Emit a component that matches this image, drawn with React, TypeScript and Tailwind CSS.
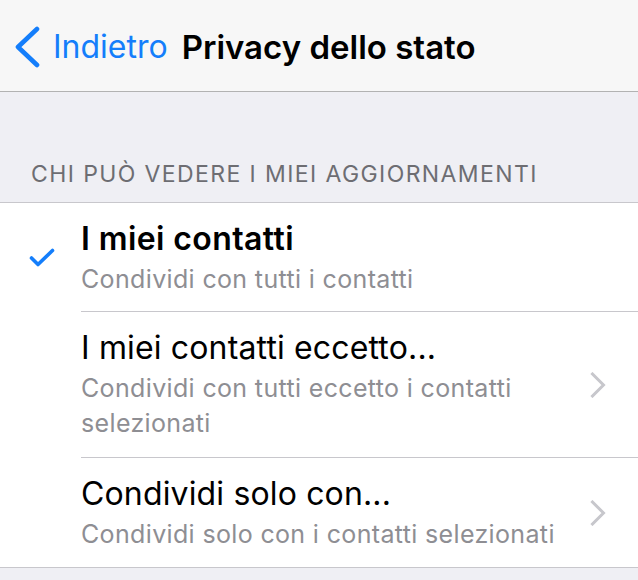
import React from "react";

type Option = {
  title: string;
  subtitle: string;
  selected?: boolean;
  chevron?: boolean;
  bold?: boolean;
  pad: string;
  last?: boolean;
};

const options: Option[] = [
  {
    title: "I miei contatti",
    subtitle: "Condividi con tutti i contatti",
    selected: true,
    bold: true,
    pad: "pt-[16px] pb-[14px]",
  },
  {
    title: "I miei contatti eccetto...",
    subtitle: "Condividi con tutti eccetto i contatti selezionati",
    chevron: true,
    pad: "pt-[16px] pb-[16px]",
  },
  {
    title: "Condividi solo con...",
    subtitle: "Condividi solo con i contatti selezionati",
    chevron: true,
    pad: "pt-[16px] pb-[15px]",
    last: true,
  },
];

const BackChevron = () => (
  <svg width="28" height="42" viewBox="0 0 28 42" fill="none">
    <path
      d="M24 3 L5 21 L24 39"
      stroke="#147efb"
      strokeWidth="4.6"
      strokeLinecap="round"
      strokeLinejoin="round"
    />
  </svg>
);

const Check = () => (
  <svg width="26" height="19" viewBox="0 0 26 19" fill="none">
    <path
      d="M2.5 10 L9 16.5 L23.5 2.5"
      stroke="#147efb"
      strokeWidth="3.6"
      strokeLinecap="round"
      strokeLinejoin="round"
    />
  </svg>
);

const Chevron = () => (
  <svg width="17" height="26" viewBox="0 0 17 26" fill="none">
    <path
      d="M2.5 2 L13.5 13 L2.5 24"
      stroke="#c7c7cc"
      strokeWidth="3"
      strokeLinecap="square"
    />
  </svg>
);

export default function App() {
  return (
    <div
      className="w-[638px] h-[580px] bg-[#efeff4] overflow-hidden"
      style={{ fontFamily: "Inter, 'Noto Sans', sans-serif" }}
    >
      <div className="h-[92px] bg-[#f7f7f7] border-b border-[#b2b2b2] flex items-center pl-[13px] pt-[2px]">
        <BackChevron />
        <span className="ml-[12px] text-[32px] leading-[40px] text-[#147efb]">
          Indietro
        </span>
        <span className="ml-[14px] text-[33px] leading-[40px] font-semibold text-black">
          Privacy dello stato
        </span>
      </div>

      <div className="h-[110px] flex items-end pb-[14px] pl-[31px]">
        <span className="text-[23px] leading-[28px] text-[#6d6d72] tracking-[1.4px]">
          CHI PUÒ VEDERE I MIEI AGGIORNAMENTI
        </span>
      </div>

      <div className="bg-white border-y border-[#c8c7cc]">
        {options.map((o) => (
          <div key={o.title} className="flex">
            <div className="w-[81px] shrink-0 flex items-center pl-[29px]">
              {o.selected && <Check />}
            </div>
            <div
              className={`flex-1 flex items-center pr-[31px] ${
                o.last ? "" : "border-b border-[#c8c7cc]"
              }`}
            >
              <div className={`flex-1 ${o.pad}`}>
                <div
                  className={`text-[32px] leading-[40px] text-black ${
                    o.bold ? "font-semibold tracking-[0.4px]" : "tracking-[0.15px]"
                  }`}
                >
                  {o.title}
                </div>
                <div className="mt-[3px] text-[25px] leading-[35px] text-[#8e8e93] tracking-[0.35px] pr-[10px]">
                  {o.subtitle}
                </div>
              </div>
              {o.chevron && <Chevron />}
            </div>
          </div>
        ))}
      </div>
    </div>
  );
}
